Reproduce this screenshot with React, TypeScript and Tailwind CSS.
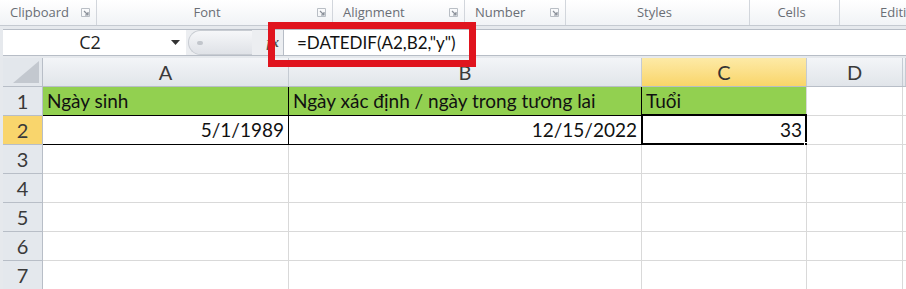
import React from 'react'

const groups = [
  { label: 'Clipboard', width: 97, align: 'left', launcher: true },
  { label: 'Font', width: 236, align: 'center', launcher: true },
  { label: 'Alignment', width: 132, align: 'left', launcher: true },
  { label: 'Number', width: 101, align: 'left', launcher: true },
  { label: 'Styles', width: 184, align: 'center', launcher: false },
  { label: 'Cells', width: 90, align: 'center', launcher: false },
  { label: 'Editing', width: 120, align: 'wide', launcher: false },
]

const columns = [
  { key: 'A', width: 'w-[246px]' },
  { key: 'B', width: 'w-[353px]' },
  { key: 'C', width: 'w-[165px]' },
  { key: 'D', width: 'w-[96px]' },
  { key: 'E', width: 'flex-1' },
]

function Launcher() {
  return (
    <svg width="9" height="9" viewBox="0 0 9 9" className="shrink-0">
      <path d="M0.5 0.5h8v8h-8z" fill="none" stroke="#b9bec5" />
      <path d="M3 3l4 4M7 4v3H4" fill="none" stroke="#8a9099" strokeWidth="1.2" />
    </svg>
  )
}

function Ribbon() {
  return (
    <div className="flex h-[26px] border-b border-[#c5cad1] bg-gradient-to-b from-[#ffffff] to-[#f1f3f6] font-['Open_Sans',sans-serif] text-[13px] text-[#6a6e75]">
      {groups.map((g) => (
        <div
          key={g.label}
          style={{ width: g.width }}
          className={`flex shrink-0 items-center border-r border-[#d2d6dc] pr-[6px] ${
            g.align === 'left' ? 'pl-[10px]' : g.align === 'wide' ? 'pl-[40px]' : 'pl-0'
          }`}
        >
          <span className={g.align === 'center' ? 'flex-1 text-center' : 'flex-1 whitespace-nowrap'}>{g.label}</span>
          {g.launcher && <Launcher />}
        </div>
      ))}
    </div>
  )
}

function FormulaBar() {
  return (
    <div className="flex h-[27px] border-y border-[#b7bdc6] bg-[#eceef1]">
      {/* Name box */}
      <div className="flex w-[183px] shrink-0 items-center bg-white pr-[6px]">
        <span className="flex-1 pl-[6px] text-center font-['Open_Sans',sans-serif] text-[18px] text-[#222]">C2</span>
        <svg width="9" height="5" viewBox="0 0 9 5">
          <path d="M0 0h9L4.5 5z" fill="#333" />
        </svg>
      </div>
      {/* Splitter */}
      <div className="flex w-[97px] shrink-0 items-center">
        <div className="ml-[2px] flex h-[25px] w-[64px] items-center rounded-l-full border border-r-0 border-[#c8ccd2] bg-gradient-to-b from-[#f6f7f9] to-[#dfe2e7] pl-[8px]">
          <span className="h-[4px] w-[6px] rounded-full bg-[#c2c6cc]" />
        </div>
        <span className="ml-auto pr-[4px] font-['Liberation_Serif',serif] text-[15px] font-bold italic text-[#555]">fx</span>
      </div>
      {/* Formula input */}
      <div className="flex flex-1 items-center border-l border-[#b7bdc6] bg-white pl-[13px] font-['Lato',sans-serif] text-[17px] text-[#111]">
        =DATEDIF(A2,B2,"y")
      </div>
    </div>
  )
}

function HeaderRow() {
  return (
    <div className="flex h-[29px] border-b border-[#b8bec7]">
      <div className="relative w-[40px] shrink-0 border-r border-[#b8bec7] bg-[#e3e7ec]">
        <svg width="26" height="22" viewBox="0 0 26 22" className="absolute bottom-[3px] right-[3px]">
          <path d="M26 0V22H0z" fill="#c3c8cf" />
        </svg>
      </div>
      {columns.map((c) => (
        <div
          key={c.key}
          className={`${c.width} flex shrink-0 items-center justify-center border-r border-[#c5cbd3] text-[20px] ${
            c.key === 'C'
              ? 'bg-gradient-to-b from-[#fdeaa6] to-[#f9d568] text-[#333]'
              : 'bg-gradient-to-b from-[#f3f5f8] to-[#e1e5ea] text-[#3a3a3a]'
          }`}
        >
          {c.key === 'E' ? '' : c.key}
        </div>
      ))}
    </div>
  )
}

type Cell = { text?: string; right?: boolean; green?: boolean; bl?: boolean; bb?: boolean; active?: boolean }

const rows: Cell[][] = [
  [
    { text: 'Ngày sinh', green: true, bb: true, bl: true },
    { text: 'Ngày xác định / ngày trong tương lai', green: true, bb: true, bl: true },
    { text: 'Tuổi', green: true },
    {},
    {},
  ],
  [
    { text: '5/1/1989', right: true, bb: true, bl: true },
    { text: '12/15/2022', right: true, bb: true, bl: true },
    { text: '33', right: true, active: true },
    {},
    {},
  ],
  [{}, {}, {}, {}, {}],
  [{}, {}, {}, {}, {}],
  [{}, {}, {}, {}, {}],
  [{}, {}, {}, {}, {}],
  [{}, {}, {}, {}, {}],
]

function SheetRow({ index, cells }: { index: number; cells: Cell[] }) {
  const selected = index === 2
  return (
    <div className="flex h-[29px]">
      <div
        className={`flex w-[40px] shrink-0 items-center justify-center border-r border-b border-[#b8bec7] text-[20px] text-[#3a3a3a] ${
          selected ? 'bg-[#f9d56c]' : 'bg-[#e4e8ed]'
        }`}
      >
        {index}
      </div>
      {cells.map((cell, i) => {
        const col = columns[i]
        return (
          <div
            key={col.key}
            className={`${col.width} relative flex shrink-0 items-center overflow-visible border-r border-b px-[4px] text-[19px] text-[#111] ${
              cell.green ? 'bg-[#92d050]' : 'bg-white'
            } ${cell.bb ? 'border-b-black' : 'border-b-[#d9d9d9]'} ${cell.bl ? 'border-r-black' : 'border-r-[#d9d9d9]'} ${
              cell.right ? 'justify-end' : 'justify-start'
            }`}
          >
            <span className="whitespace-nowrap">{cell.text}</span>
            {cell.active && (
              <>
                <div className="absolute -top-[2px] -left-[1px] -right-[1px] -bottom-[1px] border-2 border-black" />
                <div className="absolute -bottom-[3px] -right-[3px] h-[5px] w-[5px] border border-white bg-black" />
              </>
            )}
          </div>
        )
      })}
    </div>
  )
}

export default function App() {
  return (
    <div className="relative h-[289px] w-[906px] overflow-hidden bg-white font-['Lato',sans-serif]">
      <Ribbon />
      <div className="bg-[#e6e9ed] pl-[3px]">
        <div className="h-[3px]" />
        <FormulaBar />
        <div className="h-[2px]" />
        <div className="bg-white">
          <HeaderRow />
          {rows.map((cells, i) => (
            <SheetRow key={i} index={i + 1} cells={cells} />
          ))}
        </div>
      </div>
      {/* Red annotation box around the formula */}
      <div className="absolute left-[268px] top-[22px] h-[45px] w-[208px] border-[7px] border-[#e0141e]" />
    </div>
  )
}
